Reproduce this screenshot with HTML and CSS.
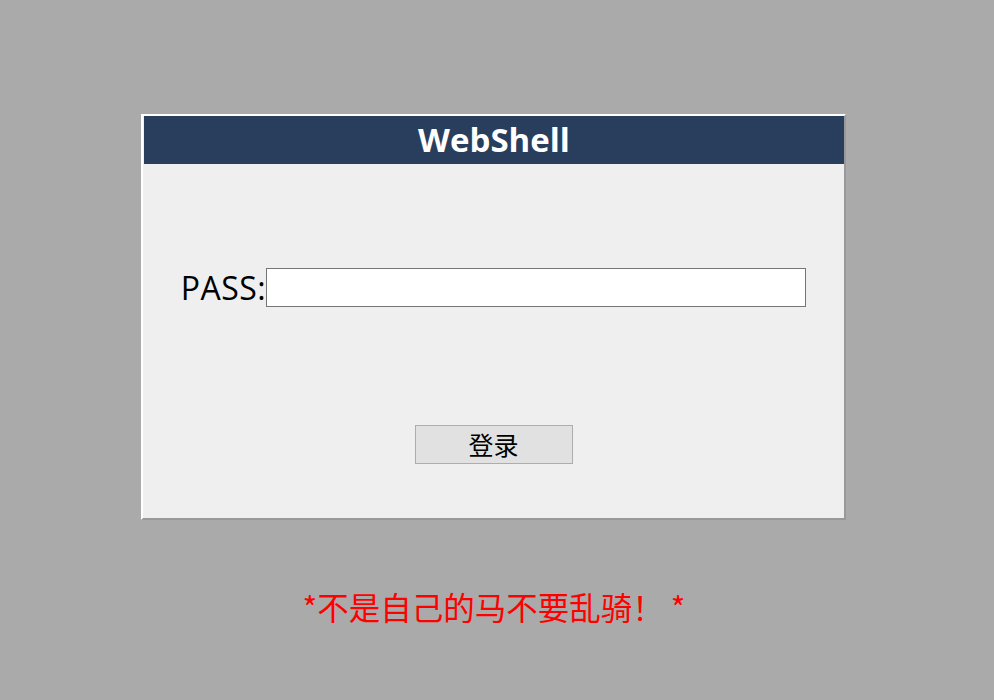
FILE: index.html
```html
<!DOCTYPE html>
<html lang="zh">
  <head>
    <meta charset="UTF-8" />
    <title>WebShell</title>
    <link rel="stylesheet" href="styles.css">
  </head>
  <body>
    <div class="login-box">
      <div class="login-title">WebShell</div>
      <form class="login-form" action="#" method="post">
        <div class="pass-row">
          <label for="pass">PASS:</label>
          <input id="pass" type="password" name="pass" />
        </div>
        <button type="submit" class="login-btn">登录</button>
      </form>
    </div>
    <p class="warning">*不是自己的马不要乱骑！ *</p>
  </body>
</html>
```

FILE: styles.css
```css
body {
  margin: 0;
  background: #aaaaaa;
  font-family: "Open Sans", "Noto Sans CJK SC", sans-serif;
}

.login-box {
  width: 701px;
  height: 402px;
  margin: 114px 0 0 141px;
  border: 2px solid;
  border-color: #ffffff #999999 #999999 #ffffff;
  background: #efefef;
}

.login-title {
  height: 48px;
  margin-left: 1px;
  background: #293d5d;
  color: #ffffff;
  font-weight: bold;
  font-size: 33px;
  line-height: 48px;
  text-align: center;
}

.login-form {
  display: flex;
  flex-direction: column;
  align-items: center;
  margin: 0;
  padding-top: 104px;
}

.pass-row {
  display: flex;
  align-items: center;
  height: 39px;
}

.pass-row label {
  font-size: 32px;
  letter-spacing: 0.5px;
  color: #000000;
}

.pass-row input {
  box-sizing: border-box;
  width: 540px;
  height: 39px;
  border: 1px solid #767676;
  background: #ffffff;
  margin: 0;
}

.login-btn {
  margin-top: 118px;
  width: 158px;
  height: 39px;
  background: #e1e1e1;
  border: 1px solid #adadad;
  font-family: "Noto Sans CJK SC", sans-serif;
  font-size: 25px;
  line-height: 1;
  padding: 0;
  color: #000000;
}

.warning {
  margin: 66px 0 0 0;
  padding-right: 6px;
  text-align: center;
  color: #ff0000;
  font-family: "Noto Sans CJK SC", sans-serif;
  font-size: 31.5px;
  line-height: 40px;
}
```
